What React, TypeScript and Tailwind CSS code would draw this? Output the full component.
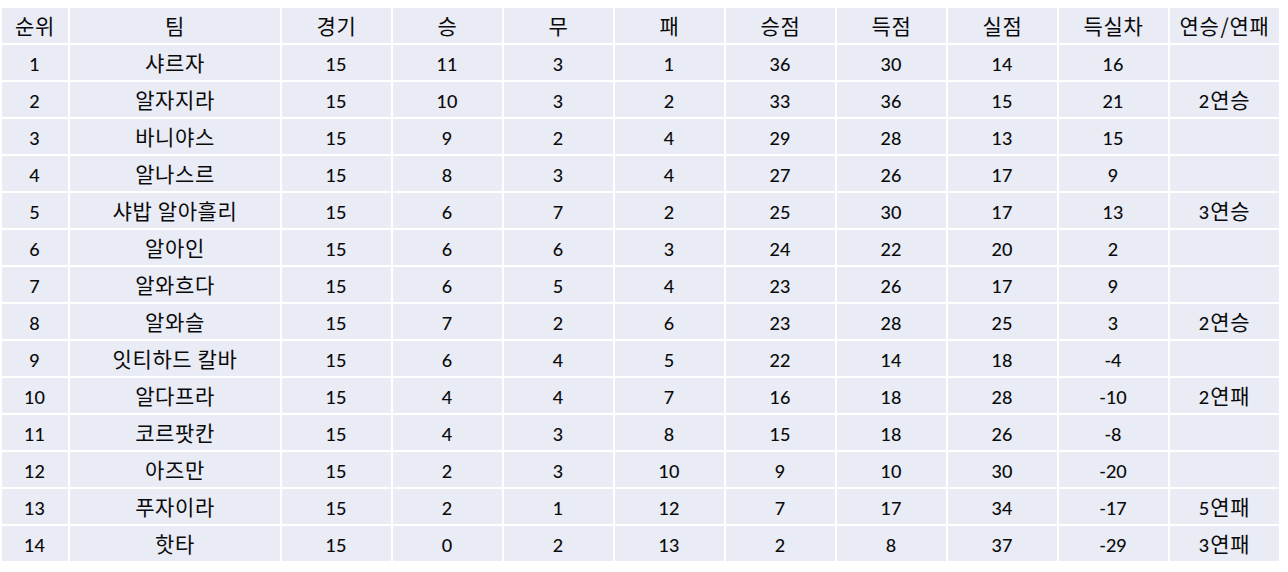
import React from "react";

const header = ["순위", "팀", "경기", "승", "무", "패", "승점", "득점", "실점", "득실차", "연승/연패"];

const rows: (string | number)[][] = [
  [1, "샤르자", 15, 11, 3, 1, 36, 30, 14, 16, ""],
  [2, "알자지라", 15, 10, 3, 2, 33, 36, 15, 21, "2연승"],
  [3, "바니야스", 15, 9, 2, 4, 29, 28, 13, 15, ""],
  [4, "알나스르", 15, 8, 3, 4, 27, 26, 17, 9, ""],
  [5, "샤밥 알아흘리", 15, 6, 7, 2, 25, 30, 17, 13, "3연승"],
  [6, "알아인", 15, 6, 6, 3, 24, 22, 20, 2, ""],
  [7, "알와흐다", 15, 6, 5, 4, 23, 26, 17, 9, ""],
  [8, "알와슬", 15, 7, 2, 6, 23, 28, 25, 3, "2연승"],
  [9, "잇티하드 칼바", 15, 6, 4, 5, 22, 14, 18, -4, ""],
  [10, "알다프라", 15, 4, 4, 7, 16, 18, 28, -10, "2연패"],
  [11, "코르팟칸", 15, 4, 3, 8, 15, 18, 26, -8, ""],
  [12, "아즈만", 15, 2, 3, 10, 9, 10, 30, -20, ""],
  [13, "푸자이라", 15, 2, 1, 12, 7, 17, 34, -17, "5연패"],
  [14, "핫타", 15, 0, 2, 13, 2, 8, 37, -29, "3연패"],
];

function Cell({ text }: { text: string }) {
  const parts = text.match(/[\uAC00-\uD7A3 ]+|\/|[^\uAC00-\uD7A3 \/]+/g) || [];
  return (
    <div className="bg-[#e9ebf5] flex items-center justify-center whitespace-pre">
      {parts.map((p, i) =>
        /[\uAC00-\uD7A3]/.test(p) ? (
          <span key={i} className="text-[21px] font-['Noto_Sans_CJK_KR',sans-serif] tracking-[0.6px]">
            {p}
          </span>
        ) : p === "/" ? (
          <span key={i} className="text-[21px] font-['Noto_Sans_CJK_KR',sans-serif] mx-[1px]">
            {p}
          </span>
        ) : (
          <span key={i} className="text-[18px] font-['Lato',sans-serif] font-medium pt-[2px] mr-[1px]">
            {p}
          </span>
        )
      )}
    </div>
  );
}

export default function App() {
  return (
    <div className="w-[1288px] h-[572px] bg-white pt-[8px] pl-[2px]">
      <div className="grid grid-cols-[66px_210px_repeat(9,109px)] auto-rows-[35px] gap-[2px] text-[#0a0a0a] leading-none">
        {header.map((h, i) => (
          <Cell key={"h" + i} text={h} />
        ))}
        {rows.map((r, ri) => r.map((c, ci) => <Cell key={ri + "-" + ci} text={String(c)} />))}
      </div>
    </div>
  );
}
